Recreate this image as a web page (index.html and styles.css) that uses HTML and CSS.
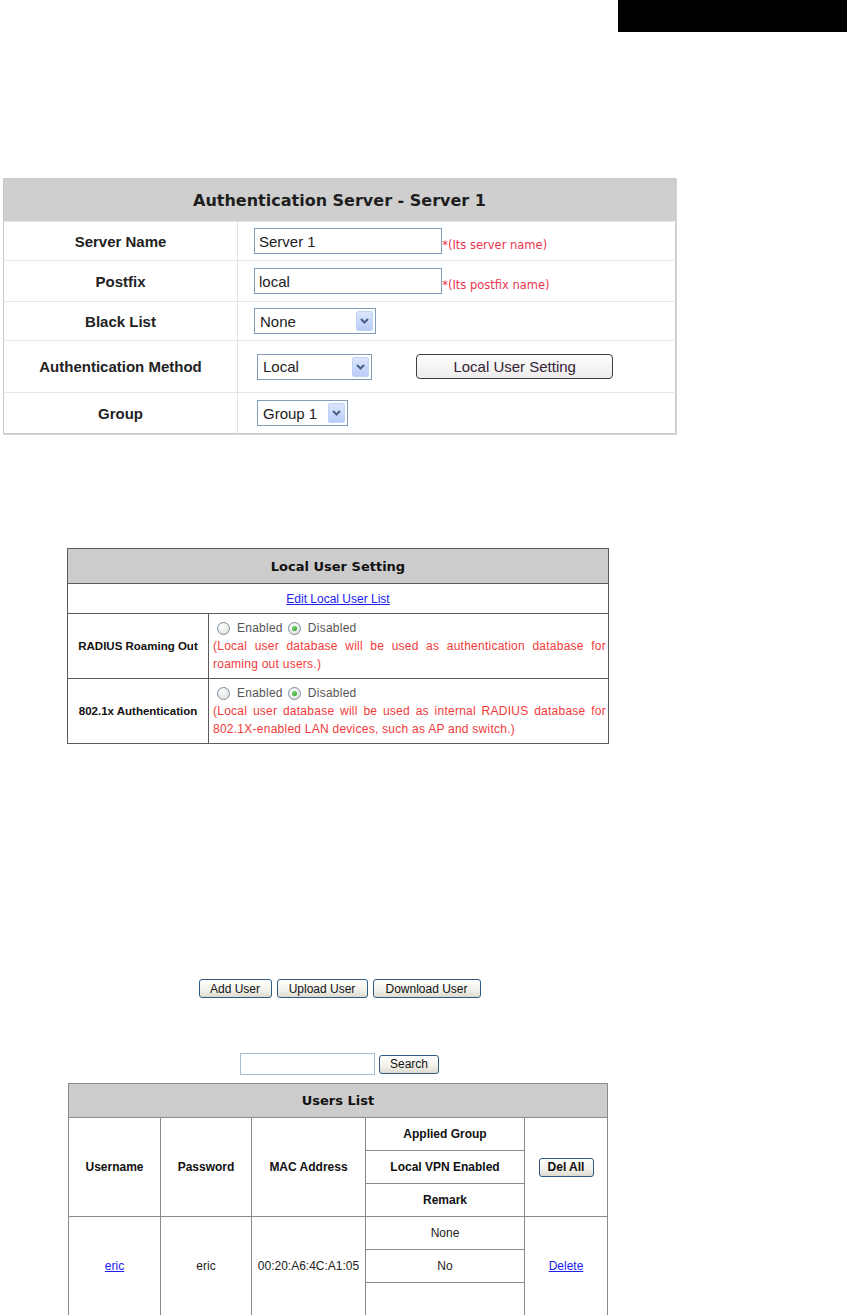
FILE: index.html
```html
<!DOCTYPE html>
<html>
<head>
  <meta charset="UTF-8">
  <title>Authentication Server - Server 1</title>
  <link rel="stylesheet" href="styles.css">
</head>
<body>
  <div class="page-tab"></div>

  <div class="content">
    <table class="server-table">
      <tr class="row-head">
        <th colspan="2">Authentication Server - Server 1</th>
      </tr>
      <tr class="row-s">
        <td class="label">Server Name</td>
        <td class="value">
          <input type="text" class="text-input" value="Server 1">
          <span class="hint">*(Its server name)</span>
        </td>
      </tr>
      <tr class="row-m">
        <td class="label">Postfix</td>
        <td class="value">
          <input type="text" class="text-input" value="local">
          <span class="hint">*(Its postfix name)</span>
        </td>
      </tr>
      <tr class="row-s">
        <td class="label">Black List</td>
        <td class="value">
          <div class="select select-none">
            <span>None</span>
            <span class="select-arrow"><svg width="11" height="8" viewBox="0 0 11 8"><path d="M2 2 L5.5 5.5 L9 2" fill="none" stroke="#4a5f86" stroke-width="2"/></svg></span>
          </div>
        </td>
      </tr>
      <tr class="row-l">
        <td class="label">Authentication Method</td>
        <td class="value">
          <div class="select select-local">
            <span>Local</span>
            <span class="select-arrow"><svg width="11" height="8" viewBox="0 0 11 8"><path d="M2 2 L5.5 5.5 L9 2" fill="none" stroke="#4a5f86" stroke-width="2"/></svg></span>
          </div>
          <button class="setting-button">Local User Setting</button>
        </td>
      </tr>
      <tr class="row-m">
        <td class="label">Group</td>
        <td class="value">
          <div class="select select-group">
            <span>Group 1</span>
            <span class="select-arrow"><svg width="11" height="8" viewBox="0 0 11 8"><path d="M2 2 L5.5 5.5 L9 2" fill="none" stroke="#4a5f86" stroke-width="2"/></svg></span>
          </div>
        </td>
      </tr>
    </table>

    <table class="local-table">
      <tr class="row-head">
        <th colspan="2">Local User Setting</th>
      </tr>
      <tr class="row-link">
        <td colspan="2" class="center"><a href="#">Edit Local User List</a></td>
      </tr>
      <tr>
        <td class="label">RADIUS Roaming Out</td>
        <td class="value">
          <div class="radio-line">
            <span class="radio"></span><span class="radio-text">Enabled</span>
            <span class="radio checked"></span><span class="radio-text">Disabled</span>
          </div>
          <div class="note">(Local user database will be used as authentication database for roaming out users.)</div>
        </td>
      </tr>
      <tr>
        <td class="label">802.1x Authentication</td>
        <td class="value">
          <div class="radio-line">
            <span class="radio"></span><span class="radio-text">Enabled</span>
            <span class="radio checked"></span><span class="radio-text">Disabled</span>
          </div>
          <div class="note">(Local user database will be used as internal RADIUS database for 802.1X-enabled LAN devices, such as AP and switch.)</div>
        </td>
      </tr>
    </table>

    <div class="user-actions">
      <button class="xp-button btn-add">Add User</button>
      <button class="xp-button btn-upload">Upload User</button>
      <button class="xp-button btn-download">Download User</button>
    </div>

    <div class="search-bar">
      <input type="text" class="search-input">
      <button class="xp-button btn-search">Search</button>
    </div>

    <table class="users-table">
      <tr class="row-head">
        <th colspan="5">Users List</th>
      </tr>
      <tr>
        <td rowspan="3" class="col-user bold">Username</td>
        <td rowspan="3" class="col-pass bold">Password</td>
        <td rowspan="3" class="col-mac bold">MAC Address</td>
        <td class="col-group bold">Applied Group</td>
        <td rowspan="3" class="col-action"><button class="xp-button btn-delall">Del All</button></td>
      </tr>
      <tr>
        <td class="bold">Local VPN Enabled</td>
      </tr>
      <tr>
        <td class="bold">Remark</td>
      </tr>
      <tr>
        <td rowspan="3"><a href="#">eric</a></td>
        <td rowspan="3">eric</td>
        <td rowspan="3">00:20:A6:4C:A1:05</td>
        <td>None</td>
        <td rowspan="3"><a href="#">Delete</a></td>
      </tr>
      <tr>
        <td>No</td>
      </tr>
      <tr>
        <td></td>
      </tr>
    </table>
  </div>
</body>
</html>
```

FILE: styles.css
```css
body {
  margin: 0;
  font-family: "Liberation Sans", Arial, sans-serif;
  color: #222;
  background: #fff;
}
.page-tab {
  width: 229px;
  height: 32px;
  margin-left: auto;
  background: #000;
}
.content {
  width: 673px;
  margin-left: 3px;
}
table {
  border-collapse: collapse;
}
a {
  color: #2020f0;
}

/* authentication server */
.server-table {
  width: 673px;
  margin-top: 146px;
  border: 1px solid #c9c9c9;
  box-shadow: 1px 1px 0 #d6d6d6;
}
.server-table th {
  height: 42px;
  padding: 0;
  background: #cfcfcf;
  font-family: "DejaVu Sans", Verdana, sans-serif;
  font-size: 16px;
  color: #1e1e1e;
}
.server-table td {
  padding: 0;
  border-top: 1px solid #e6e6e6;
  font-size: 15px;
}
.server-table .label {
  width: 233px;
  text-align: center;
  font-weight: bold;
  color: #222;
  border-right: 1px solid #e3e3e3;
}
.server-table .value {
  padding-left: 16px;
}
.row-s {
  height: 39px;
}
.row-m {
  height: 41px;
}
.row-l {
  height: 52px;
}
.text-input {
  width: 188px;
  height: 26px;
  box-sizing: border-box;
  border: 1px solid #7f9db9;
  padding: 0 4px;
  font-family: inherit;
  font-size: 15px;
  color: #222;
  vertical-align: middle;
}
.hint {
  margin-left: -4px;
  font-family: "DejaVu Sans", Verdana, sans-serif;
  font-size: 11.5px;
  color: #e8344e;
  vertical-align: -4px;
}
.select {
  display: inline-flex;
  align-items: center;
  justify-content: space-between;
  height: 26px;
  box-sizing: border-box;
  border: 1px solid #7f9db9;
  padding: 2px 2px 2px 5px;
  background: #fff;
  font-size: 15px;
  vertical-align: middle;
}
.select-none {
  width: 122px;
}
.select-local {
  width: 115px;
  margin-left: 3px;
}
.select-group {
  width: 91px;
  margin-left: 3px;
}
.select-arrow {
  display: flex;
  align-items: center;
  justify-content: center;
  width: 17px;
  height: 20px;
  box-sizing: border-box;
  border: 1px solid #c0d2f7;
  border-radius: 2px;
  background: linear-gradient(#dbe6fd, #b9cdf7);
}
.setting-button {
  width: 197px;
  height: 25px;
  margin-left: 40px;
  border: 1px solid #3d3d45;
  border-radius: 4px;
  background: linear-gradient(#fdfdfd, #ececec);
  font-family: inherit;
  font-size: 15px;
  color: #332233;
  vertical-align: middle;
}

/* local user setting */
.local-table {
  width: 542px;
  margin: 114px 0 0 64px;
  border: 1px solid #5c5c5c;
  font-size: 12px;
}
.local-table th {
  height: 34px;
  padding: 0;
  background: #cccccc;
  border: 1px solid #5c5c5c;
  font-family: "DejaVu Sans", Verdana, sans-serif;
  font-size: 13px;
  color: #111;
}
.local-table td {
  border: 1px solid #5c5c5c;
}
.row-link {
  height: 30px;
}
.center {
  text-align: center;
}
.local-table .label {
  width: 140px;
  padding: 0;
  text-align: center;
  font-weight: bold;
  font-size: 11.5px;
  color: #111;
}
.local-table .value {
  padding: 5px 2px 5px 4px;
  line-height: 18px;
}
.radio-line {
  display: flex;
  align-items: center;
  color: #555;
  letter-spacing: 0.25px;
}
.radio {
  position: relative;
  width: 11px;
  height: 11px;
  margin: 0 7px 0 4px;
  border: 1px solid #7b8da4;
  border-radius: 50%;
  background: radial-gradient(circle at 40% 35%, #ffffff, #d9dbd5);
}
.radio.checked::after {
  content: "";
  position: absolute;
  left: 3px;
  top: 3px;
  width: 5px;
  height: 5px;
  border-radius: 50%;
  background: radial-gradient(circle at 40% 35%, #7ad46a, #1f9a1f);
}
.radio-text {
  margin-right: 1px;
}
.note {
  color: #f23a3a;
  text-align: justify;
  letter-spacing: 0.25px;
}

/* users */
.user-actions {
  display: flex;
  justify-content: center;
  gap: 5px;
  margin-top: 235px;
}
.xp-button {
  height: 19px;
  padding: 0;
  border: 1px solid #2f5a86;
  border-radius: 3px;
  background: linear-gradient(#ffffff, #f2f1ea 60%, #dcdad0);
  font-family: inherit;
  font-size: 12px;
  color: #111;
}
.btn-add {
  width: 73px;
}
.btn-upload {
  width: 91px;
}
.btn-download {
  width: 108px;
}
.search-bar {
  display: flex;
  justify-content: center;
  align-items: center;
  gap: 4px;
  margin-top: 55px;
}
.search-input {
  width: 135px;
  height: 22px;
  box-sizing: border-box;
  border: 1px solid #a5bcd6;
}
.btn-search {
  width: 60px;
}
.users-table {
  width: 540px;
  margin: 8px 0 0 65px;
  border: 1px solid #8a8a8a;
  font-size: 12px;
  text-align: center;
}
.users-table th {
  height: 33px;
  padding: 0;
  background: #cccccc;
  border: 1px solid #8a8a8a;
  font-family: "DejaVu Sans", Verdana, sans-serif;
  font-size: 13px;
  color: #111;
}
.users-table td {
  height: 32px;
  padding: 0;
  border: 1px solid #8a8a8a;
  color: #222;
}
.users-table .bold {
  font-weight: bold;
  color: #111;
}
.col-user {
  width: 91px;
}
.col-pass {
  width: 90px;
}
.col-mac {
  width: 113px;
}
.col-group {
  width: 158px;
}
.btn-delall {
  width: 55px;
  font-weight: bold;
}
```
